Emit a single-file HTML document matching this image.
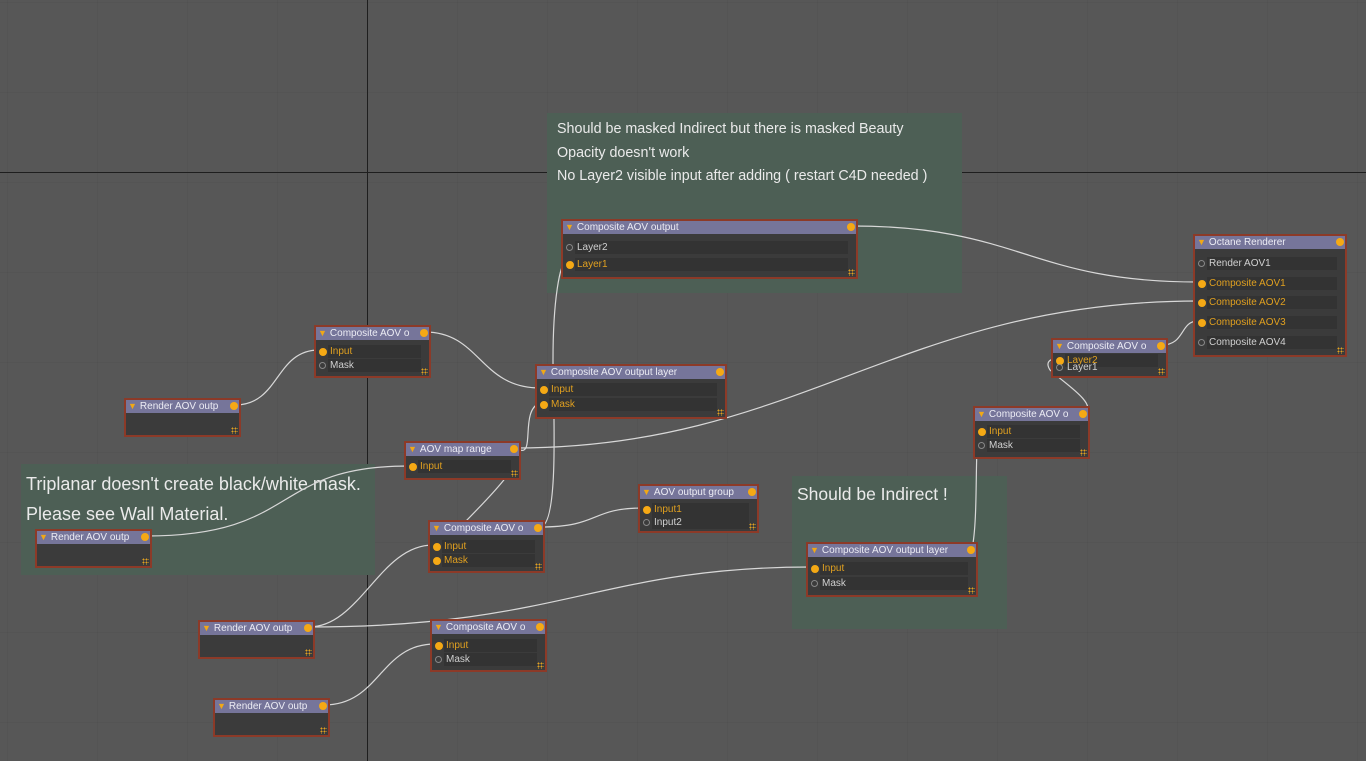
<!DOCTYPE html>
<html><head><meta charset="utf-8"><style>
body{margin:0;width:1366px;height:761px;overflow:hidden;background:#575757;font-family:"Liberation Sans","DejaVu Sans",sans-serif;position:relative}
.grid{position:absolute;inset:0;background-image:linear-gradient(to right,rgba(0,0,0,.03) 1px,transparent 1px),linear-gradient(to bottom,rgba(0,0,0,.03) 1px,transparent 1px);background-size:90px 90px;background-position:7px 2px}
.ax{position:absolute;background:#1e1e1e}
.note{position:absolute;background:#4d5f55;color:#eaeaea}
.note p{margin:0;position:absolute;white-space:nowrap}
.n{position:absolute;background:#3b3b3b;border:2px solid #8c3a28;box-sizing:border-box}
.h{height:13px;background:#76759a;color:#ececf4;font-size:10px;line-height:13px;padding-left:2px;white-space:nowrap;position:relative}
.h:before{content:"▼";color:#f0a818;font-size:9px;margin-right:3px}
.h i{position:absolute;right:1px;top:2px;width:8px;height:8px;border-radius:50%;background:#f5a915}
.r{position:absolute;left:3px;right:8px;height:13px;font-size:10px;line-height:13px;color:#d0d0d0;padding-left:11px;white-space:nowrap;z-index:1}
.r span{position:absolute;left:0;top:3px;width:5px;height:5px;border-radius:50%;border:1px solid #888}
.r.a{color:#e0a020}.r.a span{background:#f5a915;border-color:#f5a915;width:6px;height:6px;top:3px}
.r b{position:absolute;left:9px;right:0;top:0;bottom:0;background:#333;z-index:-1}
.g{position:absolute;right:1px;bottom:1px;width:7px;height:7px;background:
radial-gradient(circle,#e0a020 40%,transparent 41%) 0 0/3px 3px}
svg{position:absolute;left:0;top:0}
</style></head><body>
<div class="grid"></div>
<div class="ax" style="left:367px;top:0;width:1px;height:761px"></div>
<div class="ax" style="left:0;top:172px;width:1366px;height:1px"></div>

<div class="note" style="left:547px;top:113px;width:415px;height:180px;font-size:14.3px">
<p style="left:10px;top:8px">Should be masked Indirect but there is masked Beauty</p>
<p style="left:10px;top:32px">Opacity doesn't work</p>
<p style="left:10px;top:55px">No Layer2 visible input after adding ( restart C4D needed )</p></div>
<div class="note" style="left:21px;top:464px;width:354px;height:111px;font-size:18px">
<p style="left:5px;top:10px">Triplanar doesn't create black/white mask.</p>
<p style="left:5px;top:40px">Please see Wall Material.</p></div>
<div class="note" style="left:792px;top:476px;width:215px;height:153px;font-size:17.5px">
<p style="left:5px;top:8px">Should be Indirect !</p></div>

<svg width="1366" height="761" fill="none" stroke="#d8d8d8" stroke-width="1.2">
<path d="M852 226 C1020 226 1030 282 1198 282"/>
<path d="M540 527 C560 527 553 400 553 360 C553 300 560 262 566 262"/>
<path d="M425 332 C480 332 480 388 540 388"/>
<path d="M235 405 C280 405 275 350 319 350"/>
<path d="M515 448 C800 448 900 301 1198 301"/>
<path d="M146 536 C300 536 270 466 409 466"/>
<path d="M520 450 C535 455 520 410 540 403"/>
<path d="M515 448 C540 460 420 560 433 558"/>
<path d="M540 527 C600 527 590 508 643 508"/>
<path d="M309 627 C560 627 600 567 811 567"/>
<path d="M309 627 C360 627 380 545 433 545"/>
<path d="M324 705 C380 705 380 644 435 644"/>
<path d="M972 549 C978 520 975 460 978 431"/>
<path d="M1084 413 C1100 405 1060 380 1050 370 C1045 362 1050 359 1056 359"/>
<path d="M1162 345 C1185 345 1180 321 1198 321"/>
</svg>

<div class="n" style="left:561px;top:219px;width:297px;height:60px"><div class="h">Composite AOV output<i></i></div>
<div class="r" style="top:20px">Layer2<span></span><b></b></div><div class="r a" style="top:37px">Layer1<span></span><b></b></div><div class="g"></div></div>

<div class="n" style="left:1193px;top:234px;width:154px;height:123px"><div class="h">Octane Renderer<i></i></div>
<div class="r" style="top:21px">Render AOV1<span></span><b></b></div><div class="r a" style="top:41px">Composite AOV1<span></span><b></b></div><div class="r a" style="top:60px">Composite AOV2<span></span><b></b></div><div class="r a" style="top:80px">Composite AOV3<span></span><b></b></div><div class="r" style="top:100px">Composite AOV4<span></span><b></b></div><div class="g"></div></div>

<div class="n" style="left:1051px;top:338px;width:117px;height:40px"><div class="h">Composite AOV o<i></i></div>
<div class="r a" style="top:14px">Layer2<span></span><b></b></div><div class="r" style="top:21px">Layer1<span></span></div><div class="g"></div></div>

<div class="n" style="left:973px;top:406px;width:117px;height:53px"><div class="h">Composite AOV o<i></i></div>
<div class="r a" style="top:17px">Input<span></span><b></b></div><div class="r" style="top:31px">Mask<span></span><b></b></div><div class="g"></div></div>

<div class="n" style="left:314px;top:325px;width:117px;height:53px"><div class="h">Composite AOV o<i></i></div>
<div class="r a" style="top:18px">Input<span></span><b></b></div><div class="r" style="top:32px">Mask<span></span><b></b></div><div class="g"></div></div>

<div class="n" style="left:124px;top:398px;width:117px;height:39px"><div class="h">Render AOV outp<i></i></div><div class="g"></div></div>

<div class="n" style="left:535px;top:364px;width:192px;height:55px"><div class="h">Composite AOV output layer<i></i></div>
<div class="r a" style="top:17px">Input<span></span><b></b></div><div class="r a" style="top:32px">Mask<span></span><b></b></div><div class="g"></div></div>

<div class="n" style="left:404px;top:441px;width:117px;height:39px"><div class="h">AOV map range<i></i></div>
<div class="r a" style="top:17px">Input<span></span><b></b></div><div class="g"></div></div>

<div class="n" style="left:638px;top:484px;width:121px;height:49px"><div class="h">AOV output group<i></i></div>
<div class="r a" style="top:17px">Input1<span></span><b></b></div><div class="r" style="top:30px">Input2<span></span><b></b></div><div class="g"></div></div>

<div class="n" style="left:428px;top:520px;width:117px;height:53px"><div class="h">Composite AOV o<i></i></div>
<div class="r a" style="top:18px">Input<span></span><b></b></div><div class="r a" style="top:32px">Mask<span></span><b></b></div><div class="g"></div></div>

<div class="n" style="left:35px;top:529px;width:117px;height:39px"><div class="h">Render AOV outp<i></i></div><div class="g"></div></div>

<div class="n" style="left:806px;top:542px;width:172px;height:55px"><div class="h">Composite AOV output layer<i></i></div>
<div class="r a" style="top:18px">Input<span></span><b></b></div><div class="r" style="top:33px">Mask<span></span><b></b></div><div class="g"></div></div>

<div class="n" style="left:198px;top:620px;width:117px;height:39px"><div class="h">Render AOV outp<i></i></div><div class="g"></div></div>

<div class="n" style="left:430px;top:619px;width:117px;height:53px"><div class="h">Composite AOV o<i></i></div>
<div class="r a" style="top:18px">Input<span></span><b></b></div><div class="r" style="top:32px">Mask<span></span><b></b></div><div class="g"></div></div>

<div class="n" style="left:213px;top:698px;width:117px;height:39px"><div class="h">Render AOV outp<i></i></div><div class="g"></div></div>
</body></html>
